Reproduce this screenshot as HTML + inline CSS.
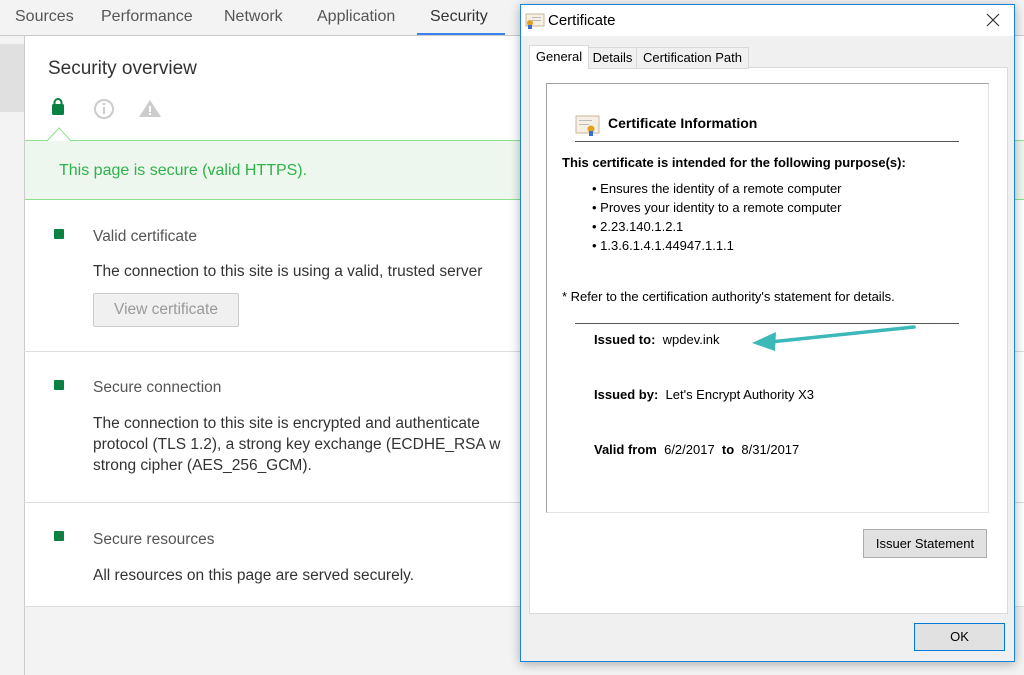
<!DOCTYPE html>
<html><head><style>
body{margin:0;width:1024px;height:675px;overflow:hidden;background:#f3f3f3;font-family:"Liberation Sans",sans-serif;position:relative}
.abs{position:absolute}
.tabs{left:0;top:0;width:1024px;height:35px;background:#f3f3f3;border-bottom:1px solid #ccc}
.tab{top:8px;font-size:16px;color:#555}
.main{left:24px;top:36px;width:1000px;height:570px;background:#fff;border-left:1px solid #ccc}
.sq{width:10px;height:10px;background:#0b8043;border-radius:1px}
.h{font-size:15.5px;color:#555}
.t{font-size:15.5px;color:#333;line-height:21px}
.sep{height:1px;background:#ddd;left:24px;width:1000px}
.dlg{left:520px;top:4px;width:493px;height:656px;background:#f0f0f0;border:1px solid #1883d7;box-shadow:0 2px 10px rgba(0,0,0,.3)}
.d{font-size:13px;color:#000}
.b{font-weight:bold}
</style></head><body>
<div class="abs tabs"></div>
<div class="abs tab" style="left:15px">Sources</div>
<div class="abs tab" style="left:101px">Performance</div>
<div class="abs tab" style="left:224px">Network</div>
<div class="abs tab" style="left:317px">Application</div>
<div class="abs tab" style="left:430px;color:#333">Security</div>
<div class="abs" style="left:417px;top:33px;width:88px;height:2px;background:#3b82f0"></div>
<div class="abs" style="left:0;top:44px;width:24px;height:68px;background:#e0e0e0"></div>
<div class="abs main"></div>
<div class="abs" style="left:24px;top:606px;width:1px;height:69px;background:#ccc"></div>
<div class="abs" style="left:48px;top:58px;font-size:19px;color:#333">Security overview</div>
<svg class="abs" style="left:50px;top:98px" width="120" height="22">
<rect x="2" y="6" width="12" height="11" rx="1.5" fill="#0b8043"/><path d="M4.5 7V4.5a3.5 3.5 0 0 1 7 0V7" stroke="#0b8043" stroke-width="2" fill="none"/>
<circle cx="54" cy="11" r="9" fill="none" stroke="#ccc" stroke-width="2"/><rect x="53" y="9" width="2" height="7" fill="#ccc"/><circle cx="54" cy="6" r="1.3" fill="#ccc"/>
<path d="M100 2 L111 19 L89 19Z" fill="#ccc"/><rect x="99" y="8" width="2" height="6" fill="#fff"/><rect x="99" y="15" width="2" height="2" fill="#fff"/>
</svg>
<div class="abs" style="left:25px;top:140px;width:999px;height:58px;background:#eef7ee;border-top:1px solid #8ee08e;border-bottom:1px solid #8ee08e"></div>
<svg class="abs" style="left:47px;top:127px" width="26" height="15"><path d="M0 14 L12 1 L24 14" fill="#fff" stroke="#8ee08e" stroke-width="1"/></svg>
<div class="abs" style="left:59px;top:162px;font-size:16px;color:#2eb24a">This page is secure (valid HTTPS).</div>
<div class="abs sq" style="left:54px;top:229px"></div>
<div class="abs h" style="left:93px;top:228px">Valid certificate</div>
<div class="abs t" style="left:93px;top:261px">The connection to this site is using a valid, trusted server</div>
<div class="abs" style="left:93px;top:293px;width:144px;height:32px;border:1px solid #ccc;border-radius:2px;background:#f0f0f0;color:#999;font-size:15.5px;text-align:center;line-height:32px">View certificate</div>
<div class="abs sep" style="top:351px"></div>
<div class="abs sq" style="left:54px;top:380px"></div>
<div class="abs h" style="left:93px;top:379px">Secure connection</div>
<div class="abs t" style="left:93px;top:413px;width:430px;overflow:hidden;white-space:nowrap">The connection to this site is encrypted and authenticate<br>protocol (TLS 1.2), a strong key exchange (ECDHE_RSA w<br>strong cipher (AES_256_GCM).</div>
<div class="abs sep" style="top:502px"></div>
<div class="abs sq" style="left:54px;top:531px"></div>
<div class="abs h" style="left:93px;top:531px">Secure resources</div>
<div class="abs t" style="left:93px;top:565px">All resources on this page are served securely.</div>
<div class="abs sep" style="top:606px"></div>

<div class="abs dlg"></div>
<div class="abs" style="left:521px;top:5px;width:493px;height:31px;background:#fff"></div>
<svg class="abs" style="left:525px;top:13px" width="20" height="16"><rect x="1" y="1" width="18" height="12" fill="#f5efe4" stroke="#c9b79a"/><rect x="7" y="4" width="9" height="1" fill="#bbb"/><rect x="7" y="7" width="9" height="1" fill="#bbb"/><circle cx="5" cy="10" r="3" fill="#e0a020"/><rect x="3" y="12" width="4" height="4" fill="#3a6fd0"/></svg>
<div class="abs" style="left:548px;top:12px;font-size:15px">Certificate</div>
<svg class="abs" style="left:986px;top:13px" width="14" height="14"><path d="M1 1L13 13M13 1L1 13" stroke="#333" stroke-width="1.2"/></svg>
<div class="abs" style="left:529px;top:67px;width:477px;height:545px;background:#fff;border:1px solid #d9d9d9"></div>
<div class="abs d" style="left:529px;top:45px;width:58px;height:23px;background:#fff;border:1px solid #d9d9d9;border-bottom:none;line-height:22px;text-align:center">General</div>
<div class="abs d" style="left:588px;top:47px;width:47px;height:20px;background:#f0f0f0;border:1px solid #d9d9d9;line-height:20px;text-align:center">Details</div>
<div class="abs d" style="left:636px;top:47px;width:111px;height:20px;background:#f0f0f0;border:1px solid #d9d9d9;line-height:20px;text-align:center">Certification Path</div>
<div class="abs" style="left:546px;top:83px;width:441px;height:428px;border:1px solid #a0a0a0;border-right-color:#e3e3e3;border-bottom-color:#e3e3e3;background:#fff"></div>
<svg class="abs" style="left:575px;top:115px" width="26" height="22"><rect x="1" y="1" width="23" height="17" fill="#f5efe4" stroke="#c9b79a"/><rect x="4" y="5" width="13" height="1" fill="#bbb"/><rect x="4" y="9" width="10" height="1" fill="#bbb"/><circle cx="16" cy="14" r="3.5" fill="#e0a020"/><rect x="14" y="16" width="4" height="5" fill="#3a6fd0"/></svg>
<div class="abs d b" style="left:608px;top:115px;font-size:14px">Certificate Information</div>
<div class="abs" style="left:575px;top:141px;width:384px;height:1px;background:#555"></div>
<div class="abs d b" style="left:562px;top:155px">This certificate is intended for the following purpose(s):</div>
<div class="abs d" style="left:592px;top:179px;line-height:19px">• Ensures the identity of a remote computer<br>• Proves your identity to a remote computer<br>• 2.23.140.1.2.1<br>• 1.3.6.1.4.1.44947.1.1.1</div>
<div class="abs d" style="left:562px;top:289px">* Refer to the certification authority's statement for details.</div>
<div class="abs" style="left:575px;top:323px;width:384px;height:1px;background:#555"></div>
<div class="abs d" style="left:594px;top:332px"><b>Issued to:</b>&nbsp; wpdev.ink</div>
<svg class="abs" style="left:750px;top:322px" width="170" height="30"><path d="M164 5 L20 20" stroke="#3cb8b8" stroke-width="3.5" stroke-linecap="round"/><path d="M2 21 L26 10 L25 29Z" fill="#3cb8b8"/></svg>
<div class="abs d" style="left:594px;top:387px"><b>Issued by:</b>&nbsp; Let's Encrypt Authority X3</div>
<div class="abs d" style="left:594px;top:442px"><b>Valid from</b>&nbsp; 6/2/2017 &nbsp;<b>to</b>&nbsp; 8/31/2017</div>
<div class="abs d" style="left:863px;top:529px;width:122px;height:27px;background:#e1e1e1;border:1px solid #adadad;line-height:27px;text-align:center">Issuer Statement</div>
<div class="abs d" style="left:914px;top:623px;width:89px;height:26px;background:#e1e1e1;border:1px solid #0078d7;line-height:26px;text-align:center">OK</div>
</body></html>
